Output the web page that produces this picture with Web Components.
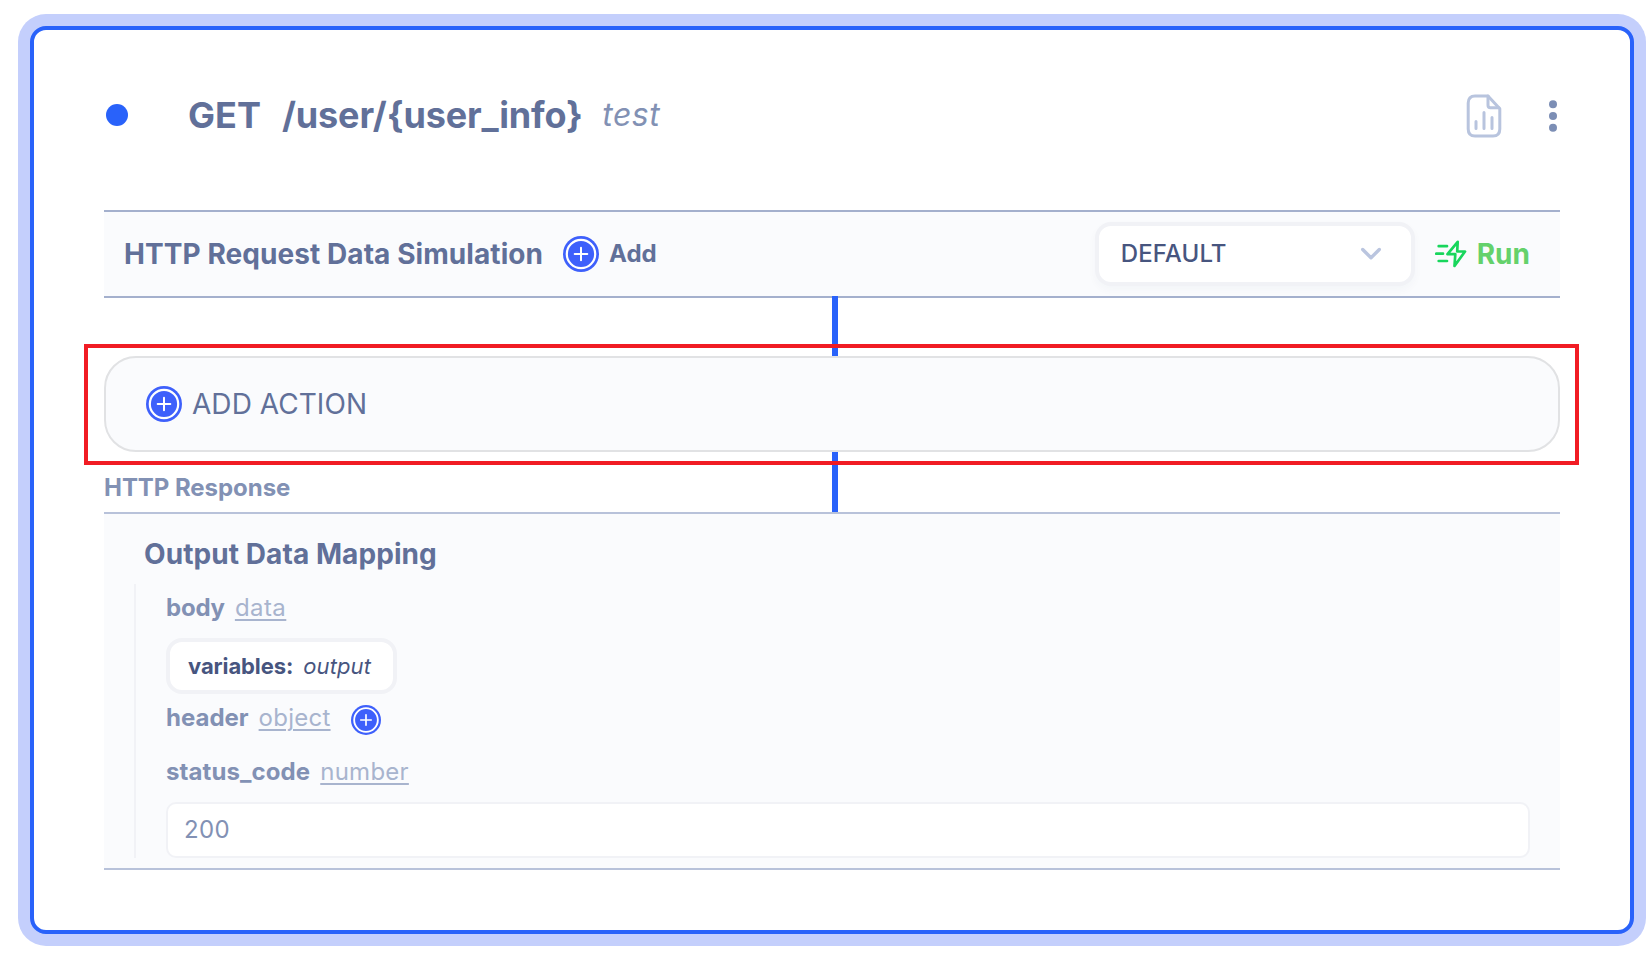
<!DOCTYPE html>
<html lang="en">
<head>
<meta charset="utf-8">
<title>GET /user/{user_info}</title>
<style>
html, body { margin: 0; height: 100%; background: #fff; }
body { font-family: Inter, "Liberation Sans", sans-serif; color: #617099; overflow: hidden; }
</style>
</head>
<body>
<endpoint-card>
  <endpoint-header slot="header" method="GET" path="/user/{user_info}" note="test"></endpoint-header>
  <request-bar>HTTP Request Data Simulation</request-bar>
  <add-action>ADD ACTION</add-action>
  <response-panel label="HTTP Response" heading="Output Data Mapping">
    <map-field name="body" type="data" class="first">
      <variable-chip name="variables:">output</variable-chip>
    </map-field>
    <map-field name="header" type="object" class="head"><plus-button slot="extra" size="30"></plus-button></map-field>
    <map-field name="status_code" type="number" class="status">
      <value-input>200</value-input>
    </map-field>
  </response-panel>
</endpoint-card>
<script>
class Base extends HTMLElement {
  connectedCallback() {
    if (!this.shadowRoot) this.attachShadow({ mode: "open" }).innerHTML = this.render();
  }
  at(n) { return this.getAttribute(n) || ""; }
}

customElements.define("endpoint-card", class extends Base {
  render() { return `<style>
    :host { display: block; padding: 26px 16px 26px 30px; height: 908px; }
    .card { box-sizing: border-box; height: 908px; border: 4px solid #2962fa; border-radius: 16px;
      box-shadow: 0 0 0 12px #c4cffc; background: #fff; padding: 0 70px; }
  </style><div class="card"><slot name="header"></slot><slot></slot></div>`; }
});

customElements.define("endpoint-header", class extends Base {
  render() { return `<style>
    :host { display: flex; align-items: center; height: 170px; margin-bottom: 10px; box-sizing: border-box; }
    .dot { width: 22px; height: 22px; border-radius: 50%; background: #2962fa; margin: 0 60px 0 2px; }
    .t { font-size: 36px; font-weight: 700; white-space: pre; }
    .p { margin-left: 21px; letter-spacing: -.13px; }
    .n { font-size: 32px; font-style: italic; color: #8291b4; margin: 0 0 1px 19.500px; letter-spacing: .5px; }
    .sp { flex: 1; }
    svg { display: block; margin-top: 2px; }
  </style><span class="dot"></span><span class="t">${this.at("method")}</span><span class="t p">${this.at("path")}</span><span class="n">${this.at("note")}</span><span class="sp"></span>
  <svg width="36" height="46" viewBox="0 0 36 46" fill="none" stroke="#b8c4de" stroke-width="3" stroke-linecap="round" stroke-linejoin="round" style="margin-right:46px">
    <path d="M22 3H9Q2.200 3 2.200 10V36Q2.200 43 9 43H27Q33.800 43 33.800 36V15.800Z"/><path d="M22 3V12.300Q22 14.800 24.500 14.800H33"/><path d="M10 28.500V35.500M18 19.500V35.500M26 24.500V35.500"/></svg>
  <svg width="10" height="34" viewBox="0 0 10 34" fill="#7c8eb5" style="margin-right:2px;margin-top:1px"><circle cx="5" cy="5.300" r="4"/><circle cx="5" cy="17" r="4"/><circle cx="5" cy="28.800" r="4"/></svg>`; }
});

customElements.define("plus-button", class extends Base {
  render() { const s = this.at("size") || 36; return `<style>:host { display: block; flex: none; width: ${s}px; height: ${s}px; } svg { display: block; }</style>
  <svg width="${s}" height="${s}" viewBox="0 0 36 36"><circle cx="18" cy="18" r="18" fill="#3e60fb"/><circle cx="18" cy="18" r="14.200" fill="none" stroke="#fff" stroke-width="2.200"/><path d="M11.700 18H24.300M18 11.700V24.300" stroke="#fff" stroke-width="2" stroke-linecap="round"/></svg>`; }
});

customElements.define("request-bar", class extends Base {
  render() { return `<style>
    :host { display: flex; align-items: center; box-sizing: border-box; height: 88px; border: solid #a4b0cd; border-width: 2px 0; background: #fafbfd; padding: 0 30px 0 20px; }
    .t { font-size: 28px; font-weight: 700; margin-right: 20px; letter-spacing: .07px; }
    .a { font-size: 24px; font-weight: 700; margin: 0 0 1px 10px; }
    .sp { flex: 1; }
    .sel { box-sizing: border-box; width: 320px; height: 64px; border: 4px solid #f1f2f6; border-radius: 16px; background: #fff; box-shadow: 0 4px 8px rgba(40,60,110,.03);
      display: flex; align-items: center; justify-content: space-between; padding: 0 29px 0 22px; font-size: 24px; font-weight: 500; color: #47557f; }
    .sel span { letter-spacing: .12px; margin-bottom: 2px; }
    .run { font-size: 28px; font-weight: 700; color: #64d16b; margin-left: 10px; }
    svg { display: block; }
    .bolt { margin-left: 20px; }
  </style><span class="t"><slot></slot></span><plus-button></plus-button><span class="a">Add</span><span class="sp"></span>
  <span class="sel"><span>DEFAULT</span><svg width="22" height="14" viewBox="0 0 22 14" fill="none" stroke="#bac5df" stroke-width="3.400" stroke-linecap="round" stroke-linejoin="round"><path d="M2.700 2.500L11 10.800L19.300 2.500"/></svg></span>
  <svg class="bolt" width="32" height="28" viewBox="0 0 32 28" fill="none" stroke="#18d65c" stroke-width="2.700" stroke-linecap="round" stroke-linejoin="round"><path d="M22.700 1.800L12.500 14.200H20.300L19.500 26L30 11.500H22.200Z"/><path d="M3.700 6.200H12M1.300 13.700H8M3.700 21H12"/></svg><span class="run">Run</span>`; }
});

customElements.define("add-action", class extends Base {
  render() { return `<style>
    :host { display: block; position: relative; height: 156px; margin-top: -2px; }
    .wrap { display: flex; flex-direction: column; }
    .line { height: 60px; width: 6px; background: #2962fa; margin-left: 728px; }
    .box { box-sizing: border-box; height: 96px; border: 2px solid #e1e2e4; border-radius: 32px; background: #fafbfd; display: flex; align-items: center; gap: 10px; padding: 0 40px; font-size: 28px; letter-spacing: .05px; }
    .mark { position: absolute; z-index: 2; left: -20px; top: 48px; width: 1487px; height: 113px; border: 4px solid #f11c24; pointer-events: none; }
  </style><div class="wrap"><span class="line"></span><div class="box"><plus-button></plus-button><span><slot></slot></span></div></div><div class="mark"></div>`; }
});

customElements.define("response-panel", class extends Base {
  render() { return `<style>
    :host { display: block; }
    .top { height: 60px; display: grid; grid-template-columns: 728px 6px; }
    .label { font-size: 24px; font-weight: 700; color: #8291b4; line-height: 30px; padding-top: 21px; letter-spacing: -.05px; }
    .line { background: #2962fa; }
    .panel { box-sizing: border-box; height: 358px; border: solid #b8c2da; border-width: 2px 0; background: #fafbfd; padding: 22px 30px 0; }
    .h { font-size: 28px; font-weight: 700; line-height: 36px; height: 48px; padding-left: 10px; letter-spacing: .08px; }
    .body { box-sizing: border-box; height: 274px; border-left: 2px solid #f1f2f6; padding-left: 30px; }
  </style><div class="top"><span class="label">${this.at("label")}</span><span class="line"></span></div>
  <div class="panel"><div class="h">${this.at("heading")}</div><div class="body"><slot></slot></div></div>`; }
});

customElements.define("map-field", class extends Base {
  render() { return `<style>
    :host { display: block; padding-top: 8px; }
    :host(.status) { padding-top: 22px; }
    .r { display: flex; align-items: center; height: 32px; font-size: 24px; line-height: 32px; margin-bottom: 14px; }
    :host(.head) .r { margin-bottom: 0; }
    b { font-weight: 700; color: #8291b4; margin-right: 10px; }
    :host(.first) b { letter-spacing: -.2px; }
    :host(.status) b { letter-spacing: .1px; }
    u { color: #a8b4ce; text-decoration-thickness: 2px; text-underline-offset: 3px; margin-right: 20px; letter-spacing: .25px; }
    :host(.first) u { letter-spacing: .45px; }
    ::slotted([slot=extra]) { position: relative; top: 2px; }
  </style><div class="r"><b>${this.at("name")}</b><u>${this.at("type")}</u><slot name="extra"></slot></div><slot></slot>`; }
});

customElements.define("variable-chip", class extends Base {
  render() { return `<style>
    :host { display: flex; width: 231px; box-sizing: border-box; align-items: center; height: 56px; border: 4px solid #f1f2f6; border-radius: 16px; background: #fff; padding: 0 0 0 18px; font-size: 22px; color: #47557f; }
    b { font-weight: 700; margin-right: 10px; letter-spacing: -.1px; } i { letter-spacing: .1px; }
  </style><b>${this.at("name")}</b><i><slot></slot></i>`; }
});

customElements.define("value-input", class extends Base {
  render() { return `<style>
    :host { display: flex; box-sizing: border-box; align-items: center; height: 56px; border: 2px solid #f1f2f6; border-radius: 10px; background: #fff; padding: 0 16px 2px; font-size: 24px; letter-spacing: .3px; color: #8291b4; }
  </style><slot></slot>`; }
});
</script>
</body>
</html>
